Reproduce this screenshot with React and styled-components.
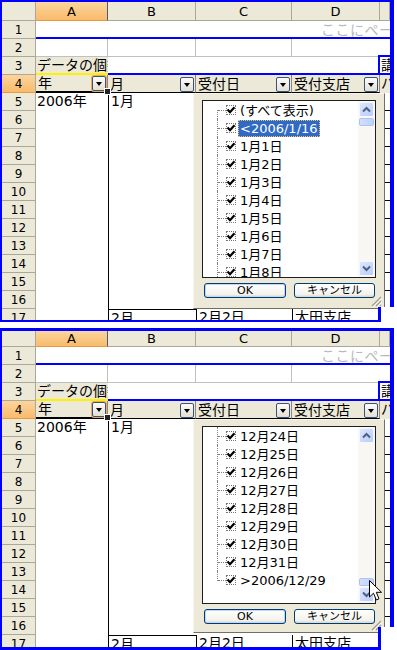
import React from 'react'
import styled, { createGlobalStyle } from 'styled-components'

const BLUE = '#0000ff'
const FACE = '#ece9d8'
const HEAD_LINE = '#aca899'
const GRID = '#c0c0c0'
const ACTIVE = 'linear-gradient(#fcd59d, #f8bb6c)'

const COL = { A: 72, B: 88, C: 96, D: 88, E: 10 }

/* Styled components: Start */

const GlobalStyle = createGlobalStyle`
  html, body { margin: 0; padding: 0; background: #fff; }
  body { font-family: "DejaVu Sans", "Noto Sans CJK JP", sans-serif; color: #000; }
`

const Page = styled.div`
  width: 397px;
  height: 650px;
  overflow: hidden;
  display: flex;
  flex-direction: column;
  gap: 6px;
`

const Frame = styled.div`
  position: relative;
  flex: none;
  width: 394px;
  height: 322px;
  box-sizing: border-box;
  border-style: solid;
  border-color: ${BLUE};
  border-width: ${({ $top }) => $top}px 4px ${({ $bottom }) => $bottom}px 2px;
`

const Notch = styled.div`
  position: absolute;
  right: -4px;
  bottom: -${({ $b }) => $b}px;
  width: 16px;
  height: ${({ $h }) => $h}px;
  box-sizing: border-box;
  background: #fff;
  border-left: 3px solid ${BLUE};
  z-index: 3;
`

const Sheet = styled.div`
  position: relative;
  width: 100%;
  height: 100%;
  overflow: hidden;
  display: flex;
  flex-direction: column;
`

const HeaderRow = styled.div`
  flex: none;
  display: flex;
  height: ${({ $h }) => $h}px;
`

const ColHead = styled.div`
  flex: none;
  width: ${({ $w }) => $w}px;
  box-sizing: border-box;
  background: ${({ $active }) => ($active ? ACTIVE : FACE)};
  border-right: 1px solid ${({ $active }) => ($active ? '#4a5b80' : HEAD_LINE)};
  border-bottom: 1px solid ${({ $active }) => ($active ? '#e79a45' : HEAD_LINE)};
  display: flex;
  align-items: center;
  justify-content: center;
  font-size: 13px;
`

const SheetRow = styled.div`
  flex: none;
  display: flex;
  height: 18px;
`

const RowHead = styled.div`
  flex: none;
  width: 34px;
  box-sizing: border-box;
  background: ${({ $active }) => ($active ? ACTIVE : FACE)};
  border-right: 1px solid ${HEAD_LINE};
  border-bottom: 1px solid ${({ $active }) => ($active ? '#e79a45' : HEAD_LINE)};
  display: flex;
  align-items: center;
  justify-content: center;
  font-size: 12px;
`

const Cell = styled.div`
  flex: none;
  position: relative;
  width: ${({ $w }) => $w}px;
  box-sizing: border-box;
  background: ${({ $bg }) => $bg || '#fff'};
  border-top: ${({ $top }) => $top || 'none'};
  border-right: ${({ $right }) => $right || 'none'};
  border-bottom: ${({ $bottom }) => $bottom || 'none'};
  border-left: ${({ $left }) => $left || 'none'};
  padding-left: ${({ $pad }) => ($pad === undefined ? 2 : $pad)}px;
  font-size: 14px;
  line-height: 17px;
  white-space: nowrap;
  overflow: ${({ $clip }) => ($clip ? 'hidden' : 'visible')};
`

const DropHint = styled.span`
  display: block;
  padding: 2px 0 0 285px;
  font-size: 14px;
  line-height: 14px;
  color: #b9b9b9;
  letter-spacing: 0.5px;
`

const FieldCell = styled.div`
  flex: none;
  position: relative;
  width: ${({ $w }) => $w}px;
  box-sizing: border-box;
  background: ${FACE};
  border-right: 1px solid #8c8a80;
  border-bottom: ${({ $active }) => ($active ? '2px' : '1px')} solid #000;
  padding-left: 2px;
  display: flex;
  align-items: flex-end;
  justify-content: space-between;
  font-size: 14px;
  line-height: 16px;
  white-space: nowrap;
`

const DropBtn = styled.span`
  flex: none;
  width: 14px;
  height: 15px;
  box-sizing: border-box;
  margin: 0 1px 0 0;
  border: 1px solid #3d5277;
  border-radius: 2px;
  background: linear-gradient(#fcfcfa, #e2dfd3);
  display: flex;
  align-items: center;
  justify-content: center;
  box-shadow: ${({ $hot }) => ($hot ? '0 0 0 1px #f3a556' : 'none')};

  &::after {
    content: '';
    border-left: 3.5px solid transparent;
    border-right: 3.5px solid transparent;
    border-top: 4px solid #000;
  }
`

const FillHandle = styled.span`
  position: absolute;
  right: -4px;
  bottom: -4px;
  width: 5px;
  height: 5px;
  background: #222;
  border: 1px solid #fff;
  z-index: 1;
`

const Popup = styled.div`
  position: absolute;
  left: 191px;
  top: ${({ $top }) => $top}px;
  width: 192px;
  height: ${({ $h }) => $h}px;
  box-sizing: border-box;
  background: ${FACE};
  border: 1px solid;
  border-color: #f6f4ec #716f64 #716f64 #f6f4ec;
  padding: 6px 8px 0;
  display: flex;
  flex-direction: column;
  z-index: 2;
`

const ListBox = styled.div`
  flex: none;
  height: 178px;
  box-sizing: border-box;
  border: 1px solid #1e1e1e;
  background: #fff;
  display: flex;
`

const Items = styled.div`
  flex: 1;
  overflow: hidden;
`

const Item = styled.div`
  display: flex;
  align-items: center;
  height: 18px;
`

const Branch = styled.span`
  position: relative;
  flex: none;
  width: 23px;
  height: 100%;

  &::before {
    content: '';
    position: absolute;
    left: 14px;
    top: ${({ $first }) => ($first ? '9px' : '0')};
    bottom: ${({ $last }) => ($last ? '8px' : '0')};
    border-left: 1px dotted #808080;
  }

  &::after {
    content: '';
    position: absolute;
    left: 15px;
    width: 8px;
    top: 9px;
    border-top: 1px dotted #808080;
  }
`

const Check = styled.span`
  flex: none;
  position: relative;
  width: 10px;
  height: 10px;
  box-sizing: border-box;
  border: 1px dotted #777;
  margin-right: 2px;

  svg {
    position: absolute;
    left: -1px;
    top: -1px;
  }
`

const Label = styled.span`
  padding: 0 2px;
  font-family: "DejaVu Sans", "Noto Sans CJK JP", sans-serif;
  font-size: 13px;
  line-height: 17px;
  white-space: nowrap;
  color: ${({ $sel }) => ($sel ? '#fff' : '#000')};
  background: ${({ $sel }) => ($sel ? '#316ac5' : 'transparent')};
  outline: ${({ $sel }) => ($sel ? '1px dotted #e8c46a' : 'none')};
  outline-offset: -1px;
`

const ScrollBar = styled.div`
  flex: none;
  width: 17px;
  display: flex;
  flex-direction: column;
  background: #f8f7f3;
`

const ScrollBtn = styled.div`
  flex: none;
  width: 15px;
  height: 15px;
  margin: 1px;
  box-sizing: border-box;
  border: 1px solid #f4f7ff;
  border-radius: 2px;
  background: linear-gradient(135deg, #dde7fe, #b9cdf9);
  display: flex;
  align-items: center;
  justify-content: center;
`

const Track = styled.div`
  flex: 1;
  display: flex;
  flex-direction: column;
  justify-content: ${({ $end }) => ($end ? 'flex-end' : 'flex-start')};
  padding: 0 1px;
`

const Thumb = styled.div`
  height: 8px;
  box-sizing: border-box;
  border: 1px solid #aec3f2;
  border-radius: 2px;
  background: linear-gradient(90deg, #d3e0fd, #bfd1fa);
`

const ButtonRow = styled.div`
  display: flex;
  gap: 8px;
  margin-top: 5px;
  padding: 0 2px;
`

const XPButton = styled.div`
  flex: none;
  width: ${({ $w }) => $w}px;
  height: 15px;
  box-sizing: border-box;
  border: 1px solid #003c74;
  border-radius: 3px;
  background: linear-gradient(#ffffff, #f3f2ec 80%, #d8d3c8);
  box-shadow: ${({ $default }) => ($default ? 'inset 0 0 0 1px #c2d5f8' : 'none')};
  display: flex;
  align-items: center;
  justify-content: center;
  font-size: 11px;
  line-height: 13px;
`

const Grip = styled.svg`
  position: absolute;
  right: 2px;
  bottom: 1px;
`

const Cursor = styled.svg`
  position: absolute;
  left: 175px;
  top: 160px;
  z-index: 3;
`

/* Styled components: End */

const CheckMark = () => (
  <svg width="10" height="10" viewBox="0 0 10 10">
    <polyline points="1.5,4.5 4,7.2 8.5,2.2" fill="none" stroke="#000" strokeWidth="2.2" />
  </svg>
)

const Chevron = ({ up }) => (
  <svg width="9" height="7" viewBox="0 0 9 7">
    <polyline
      points={up ? '1,5.5 4.5,2 8,5.5' : '1,1.5 4.5,5 8,1.5'}
      fill="none"
      stroke="#4d6185"
      strokeWidth="2"
    />
  </svg>
)

const Field = ({ w, text, hot, active }) => (
  <FieldCell $w={w} $active={active}>
    <span>{text}</span>
    <DropBtn $hot={hot} />
    {active && <FillHandle />}
  </FieldCell>
)

const FilterPopup = ({ top, h, items, treeFirst, treeLast, thumbEnd, cursor }) => (
  <Popup $top={top} $h={h}>
    <ListBox>
      <Items>
        {items.map((it, i) => (
          <Item key={i}>
            <Branch $first={treeFirst && i === 0} $last={treeLast && i === items.length - 1} />
            <Check>
              <CheckMark />
            </Check>
            <Label $sel={it.sel}>{it.text}</Label>
          </Item>
        ))}
      </Items>
      <ScrollBar>
        <ScrollBtn>
          <Chevron up />
        </ScrollBtn>
        <Track $end={thumbEnd}>
          <Thumb />
        </Track>
        <ScrollBtn>
          <Chevron />
        </ScrollBtn>
      </ScrollBar>
    </ListBox>
    <ButtonRow>
      <XPButton $w={82} $default>OK</XPButton>
      <XPButton $w={81}>キャンセル</XPButton>
    </ButtonRow>
    <Grip width="12" height="12" viewBox="0 0 12 12">
      <path d="M11 2 L2 11 M11 6 L6 11 M11 10 L10 11" stroke="#a19d8c" strokeWidth="1.2" />
      <path d="M12 3 L3 12 M12 7 L7 12" stroke="#fff" strokeWidth="1" />
    </Grip>
    {cursor && (
      <Cursor width="14" height="22" viewBox="0 0 14 22">
        <path
          d="M0.5 0.5 L0.5 17 L4.5 13.2 L7.3 20 L10 18.8 L7.3 12.3 L12.5 12.3 Z"
          fill="#fff"
          stroke="#000"
          strokeWidth="1"
          strokeLinejoin="round"
        />
      </Cursor>
    )}
  </Popup>
)

const SheetPanel = ({ headH, bTop, bBottom, notchH, popupH, items, treeFirst, treeLast, thumbEnd, cursor }) => {
  const dataRows = Array.from({ length: 12 }, (_, i) => i + 5)
  return (
    <Frame $top={bTop} $bottom={bBottom}>
      <Sheet>
        <HeaderRow $h={headH}>
          <ColHead $w={34} />
          <ColHead $w={COL.A} $active>A</ColHead>
          <ColHead $w={COL.B}>B</ColHead>
          <ColHead $w={COL.C}>C</ColHead>
          <ColHead $w={COL.D}>D</ColHead>
          <ColHead $w={COL.E} />
        </HeaderRow>

        <SheetRow>
          <RowHead>1</RowHead>
          <Cell $w={354} $pad={0} $bottom={`2px solid ${BLUE}`}>
            <DropHint>ここにページ フィールドをドラッグします</DropHint>
          </Cell>
        </SheetRow>

        <SheetRow>
          <RowHead>2</RowHead>
          <Cell $w={COL.A} $right={`1px solid ${GRID}`} $bottom={`1px solid ${GRID}`} />
          <Cell $w={COL.B} $right={`1px solid ${GRID}`} $bottom={`1px solid ${GRID}`} />
          <Cell $w={COL.C} $right={`1px solid ${GRID}`} $bottom={`1px solid ${GRID}`} />
          <Cell $w={COL.D - 2} $bottom={`1px solid ${GRID}`} />
          <Cell $w={COL.E + 2} $bottom={`2px solid ${BLUE}`} />
        </SheetRow>

        <SheetRow>
          <RowHead>3</RowHead>
          <Cell $w={COL.A} $bg={FACE} $clip $pad={1} $bottom="2px solid #fff200">
            データの個数 / 受付番号
          </Cell>
          <Cell $w={COL.B + COL.C + COL.D - 2} $bottom={`2px solid ${BLUE}`} />
          <Cell $w={COL.E + 2} $clip $pad={1} $left={`2px solid ${BLUE}`} $bottom={`2px solid ${BLUE}`}>
            講
          </Cell>
        </SheetRow>

        <SheetRow>
          <RowHead $active>4</RowHead>
          <Field w={COL.A} text="年" hot active />
          <Field w={COL.B} text="月" />
          <Field w={COL.C} text="受付日" />
          <Field w={COL.D} text="受付支店" />
          <Cell $w={COL.E} $bg={FACE} $clip $pad={1}>
            パ
          </Cell>
        </SheetRow>

        {dataRows.map((n) => (
          <SheetRow key={n}>
            <RowHead>{n}</RowHead>
            <Cell $w={COL.A} $pad={1}>{n === 5 ? '2006年' : ''}</Cell>
            <Cell $w={COL.B} $left="1px solid #000">{n === 5 ? '1月' : ''}</Cell>
            <Cell $w={COL.C} />
            <Cell $w={COL.D} />
            <Cell $w={COL.E} $left={`2px solid ${BLUE}`} $bottom="1px solid #000" />
          </SheetRow>
        ))}

        <SheetRow>
          <RowHead>17</RowHead>
          <Cell $w={COL.A} />
          <Cell $w={COL.B} $left="1px solid #000" $top="1px solid #000">2月</Cell>
          <Cell $w={COL.C} $left="1px solid #000">2月2日</Cell>
          <Cell $w={COL.D} $left="1px solid #000">太田支店</Cell>
          <Cell $w={COL.E} $left={`2px solid ${BLUE}`} />
        </SheetRow>

        <FilterPopup
          top={headH + 72}
          h={popupH}
          items={items}
          treeFirst={treeFirst}
          treeLast={treeLast}
          thumbEnd={thumbEnd}
          cursor={cursor}
        />
      </Sheet>
      <Notch $b={bBottom} $h={notchH} />
    </Frame>
  )
}

const firstDays = Array.from({ length: 8 }, (_, i) => ({ text: `1月${i + 1}日` }))
const topItems = [{ text: '(すべて表示)' }, { text: '<2006/1/16', sel: true }, ...firstDays]

const lastDays = Array.from({ length: 8 }, (_, i) => ({ text: `12月${i + 24}日` }))
const bottomItems = [...lastDays, { text: '>2006/12/29' }]

export default function App() {
  return (
    <Page>
      <GlobalStyle />
      <SheetPanel
        headH={19}
        bTop={2}
        bBottom={2}
        notchH={15}
        popupH={216}
        items={topItems}
        treeFirst
      />
      <SheetPanel
        headH={16}
        bTop={3}
        bBottom={3}
        notchH={23}
        popupH={214}
        items={bottomItems}
        treeLast
        thumbEnd
        cursor
      />
    </Page>
  )
}
